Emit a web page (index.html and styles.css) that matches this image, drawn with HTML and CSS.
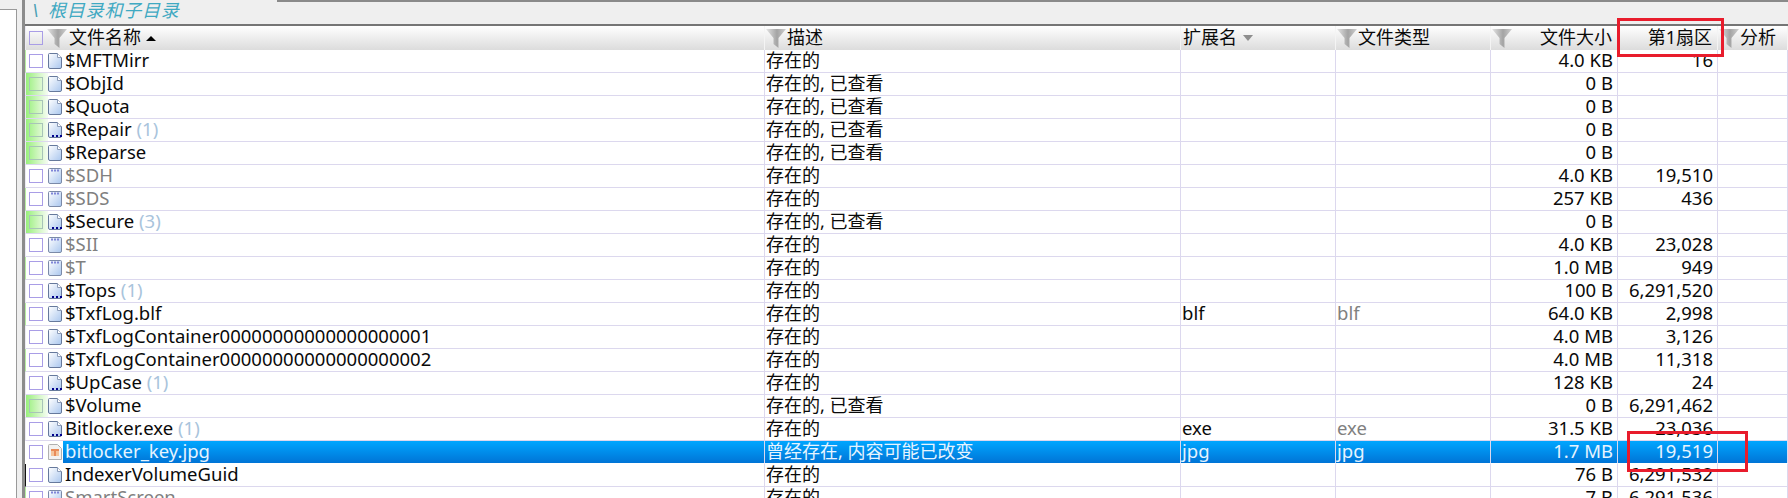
FILE: index.html
```html
<!DOCTYPE html>
<html lang="zh">
<head>
  <meta charset="UTF-8" />
  <title>根目录和子目录</title>
  <link rel="stylesheet" href="styles.css">
</head>
<body>
  <svg class="defs" aria-hidden="true">
    <defs>
      <linearGradient id="paper" x1="0" y1="0" x2="1" y2="1">
        <stop offset="0" stop-color="#ffffff" />
        <stop offset="1" stop-color="#a9c6ee" />
      </linearGradient>
      <linearGradient id="funnel" x1="0" y1="0" x2="1" y2="0">
        <stop offset="0" stop-color="#e4e4e4" />
        <stop offset=".55" stop-color="#a4a4a4" />
        <stop offset="1" stop-color="#cfcfcf" />
      </linearGradient>
      <symbol id="file" viewBox="0 0 14 16">
        <path d="M1.5.5H9.5L13.5 4.5V14a1.5 1.5 0 0 1-1.5 1.5H2A1.5 1.5 0 0 1 .5 14V1.500A1 1 0 0 1 1.500.5Z" fill="url(#paper)" stroke="#66799c" />
        <path d="M9.500.5V4.500H13.500" fill="#fff" stroke="#8c9cb8" />
      </symbol>
      <symbol id="sys" viewBox="0 0 14 16">
        <path d="M1.500.5H12.500A1 1 0 0 1 13.500 1.500V14a1.500 1.500 0 0 1-1.500 1.500H2A1.500 1.500 0 0 1 .5 14V1.500A1 1 0 0 1 1.500.5Z" fill="url(#paper)" stroke="#7b8aa8" />
        <path d="M3 2.500H11" stroke="#7f86d8" stroke-width="2" stroke-dasharray="2 1" />
      </symbol>
      <symbol id="jpg" viewBox="0 0 14 16">
        <path d="M1.500.5H9.500L13.500 4.500V15.500H.5V1.500A1 1 0 0 1 1.500.5Z" fill="#f2f2f2" stroke="#b0b0b0" />
        <rect x="3" y="5" width="8" height="7" fill="#f4c49c" />
        <path d="M3 5H11V7H3ZM6 7H8V12H6Z" fill="#e88a58" />
      </symbol>
      <symbol id="filter" viewBox="0 0 20 19">
        <path d="M0 0H20L12.500 9V19L7.500 15V9Z" fill="url(#funnel)" />
      </symbol>
    </defs>
  </svg>

  <div class="left-pane"></div>

  <main class="main-pane">
    <div class="top-edge"></div>
    <div class="crumb"><span class="crumb-root">\</span><span>根目录和子目录</span></div>

    <table class="files">
      <colgroup>
        <col class="c-name"><col class="c-desc"><col class="c-ext"><col class="c-type"><col class="c-size"><col class="c-sector"><col>
      </colgroup>
      <thead>
        <tr>
          <th><div class="head head-first"><span class="tick"></span><svg class="filter"><use href="#filter" /></svg><span class="head-name">文件名称</span><span class="sort-up"></span></div></th>
          <th><div class="head"><svg class="filter"><use href="#filter" /></svg>描述</div></th>
          <th><div class="head head-plain">扩展名<span class="sort-down"></span></div></th>
          <th><div class="head"><svg class="filter"><use href="#filter" /></svg>文件类型</div></th>
          <th><div class="head"><svg class="filter"><use href="#filter" /></svg><span class="head-right">文件大小</span></div></th>
          <th><div class="head"><span class="head-right">第1扇区</span></div></th>
          <th><div class="head"><svg class="filter"><use href="#filter" /></svg>分析</div></th>
        </tr>
      </thead>
      <tbody>
        <tr class="edge"><td><div class="name-cell"><span class="tick"></span><svg class="icon"><use href="#file" /></svg><span class="fname">$MFTMirr</span></div></td><td class="desc">存在的</td><td></td><td></td><td class="num">4.0 KB</td><td class="num">16</td><td></td></tr>
        <tr class="seen"><td><div class="name-cell"><span class="tick"></span><svg class="icon"><use href="#file" /></svg><span class="fname">$ObjId</span></div></td><td class="desc">存在的, 已查看</td><td></td><td></td><td class="num">0 B</td><td class="num"></td><td></td></tr>
        <tr class="seen"><td><div class="name-cell"><span class="tick"></span><svg class="icon"><use href="#file" /></svg><span class="fname">$Quota</span></div></td><td class="desc">存在的, 已查看</td><td></td><td></td><td class="num">0 B</td><td class="num"></td><td></td></tr>
        <tr class="seen"><td><div class="name-cell"><span class="tick"></span><span class="icon-wrap"><svg class="icon"><use href="#file" /></svg><span class="dots"></span></span><span class="fname">$Repair <span class="count">(1)</span></span></div></td><td class="desc">存在的, 已查看</td><td></td><td></td><td class="num">0 B</td><td class="num"></td><td></td></tr>
        <tr class="seen"><td><div class="name-cell"><span class="tick"></span><svg class="icon"><use href="#file" /></svg><span class="fname">$Reparse</span></div></td><td class="desc">存在的, 已查看</td><td></td><td></td><td class="num">0 B</td><td class="num"></td><td></td></tr>
        <tr><td><div class="name-cell"><span class="tick"></span><svg class="icon"><use href="#sys" /></svg><span class="fname grey">$SDH</span></div></td><td class="desc">存在的</td><td></td><td></td><td class="num">4.0 KB</td><td class="num">19,510</td><td></td></tr>
        <tr class="edge"><td><div class="name-cell"><span class="tick"></span><svg class="icon"><use href="#sys" /></svg><span class="fname grey">$SDS</span></div></td><td class="desc">存在的</td><td></td><td></td><td class="num">257 KB</td><td class="num">436</td><td></td></tr>
        <tr class="seen"><td><div class="name-cell"><span class="tick"></span><span class="icon-wrap"><svg class="icon"><use href="#file" /></svg><span class="dots"></span></span><span class="fname">$Secure <span class="count">(3)</span></span></div></td><td class="desc">存在的, 已查看</td><td></td><td></td><td class="num">0 B</td><td class="num"></td><td></td></tr>
        <tr><td><div class="name-cell"><span class="tick"></span><svg class="icon"><use href="#sys" /></svg><span class="fname grey">$SII</span></div></td><td class="desc">存在的</td><td></td><td></td><td class="num">4.0 KB</td><td class="num">23,028</td><td></td></tr>
        <tr class="edge"><td><div class="name-cell"><span class="tick"></span><svg class="icon"><use href="#sys" /></svg><span class="fname grey">$T</span></div></td><td class="desc">存在的</td><td></td><td></td><td class="num">1.0 MB</td><td class="num">949</td><td></td></tr>
        <tr><td><div class="name-cell"><span class="tick"></span><span class="icon-wrap"><svg class="icon"><use href="#file" /></svg><span class="dots"></span></span><span class="fname">$Tops <span class="count">(1)</span></span></div></td><td class="desc">存在的</td><td></td><td></td><td class="num">100 B</td><td class="num">6,291,520</td><td></td></tr>
        <tr class="edge"><td><div class="name-cell"><span class="tick"></span><svg class="icon"><use href="#file" /></svg><span class="fname">$TxfLog.blf</span></div></td><td class="desc">存在的</td><td>blf</td><td class="grey">blf</td><td class="num">64.0 KB</td><td class="num">2,998</td><td></td></tr>
        <tr><td><div class="name-cell"><span class="tick"></span><svg class="icon"><use href="#file" /></svg><span class="fname">$TxfLogContainer00000000000000000001</span></div></td><td class="desc">存在的</td><td></td><td></td><td class="num">4.0 MB</td><td class="num">3,126</td><td></td></tr>
        <tr class="edge"><td><div class="name-cell"><span class="tick"></span><svg class="icon"><use href="#file" /></svg><span class="fname">$TxfLogContainer00000000000000000002</span></div></td><td class="desc">存在的</td><td></td><td></td><td class="num">4.0 MB</td><td class="num">11,318</td><td></td></tr>
        <tr><td><div class="name-cell"><span class="tick"></span><span class="icon-wrap"><svg class="icon"><use href="#file" /></svg><span class="dots"></span></span><span class="fname">$UpCase <span class="count">(1)</span></span></div></td><td class="desc">存在的</td><td></td><td></td><td class="num">128 KB</td><td class="num">24</td><td></td></tr>
        <tr class="seen"><td><div class="name-cell"><span class="tick"></span><svg class="icon"><use href="#file" /></svg><span class="fname">$Volume</span></div></td><td class="desc">存在的, 已查看</td><td></td><td></td><td class="num">0 B</td><td class="num">6,291,462</td><td></td></tr>
        <tr><td><div class="name-cell"><span class="tick"></span><span class="icon-wrap"><svg class="icon"><use href="#file" /></svg><span class="dots"></span></span><span class="fname">Bitlocker.exe <span class="count">(1)</span></span></div></td><td class="desc">存在的</td><td>exe</td><td class="grey">exe</td><td class="num">31.5 KB</td><td class="num">23,036</td><td></td></tr>
        <tr class="selected"><td><div class="name-cell"><span class="tick"></span><svg class="icon"><use href="#jpg" /></svg><span class="fname">bitlocker_key.jpg</span></div></td><td class="desc">曾经存在, 内容可能已改变</td><td>jpg</td><td>jpg</td><td class="num">1.7 MB</td><td class="num">19,519</td><td></td></tr>
        <tr class="edge-dark"><td><div class="name-cell"><span class="tick"></span><svg class="icon"><use href="#file" /></svg><span class="fname">IndexerVolumeGuid</span></div></td><td class="desc">存在的</td><td></td><td></td><td class="num">76 B</td><td class="num">6,291,532</td><td></td></tr>
        <tr class="edge"><td><div class="name-cell"><span class="tick"></span><svg class="icon"><use href="#sys" /></svg><span class="fname grey">SmartScreen</span></div></td><td class="desc">存在的</td><td></td><td></td><td class="num">7 B</td><td class="num">6,291,536</td><td></td></tr>
      </tbody>
    </table>
  </main>

  <div class="mark mark-head"></div>
  <div class="mark mark-row"></div>
</body>
</html>
```

FILE: styles.css
```css
html, body {
  margin: 0;
  height: 498px;
  overflow: hidden;
}
body {
  display: flex;
  align-items: flex-start;
  background: #efefef;
  color: #0a0a0a;
  font-family: "Noto Sans", "Noto Sans CJK SC", sans-serif;
  font-size: 18.5px;
}
.defs {
  position: absolute;
  width: 0;
  height: 0;
}
.left-pane {
  width: 17px;
  height: 489px;
  margin-top: 9px;
  margin-right: 5px;
  background: #ffffff;
  border-top: 1px solid #9a9a9a;
  border-right: 1px solid #9a9a9a;
  box-sizing: border-box;
  flex: none;
}
.main-pane {
  flex: 1;
  min-width: 0;
  border-left: 3px solid #8c8c8c;
}
.top-edge {
  height: 2px;
  margin-left: 252px;
  border-top: 2px solid #8a8a8a;
  box-sizing: border-box;
}
.crumb {
  height: 17px;
  display: flex;
  align-items: center;
  padding: 0 0 5px 7px;
  border-bottom: 2px solid #757575;
  color: #3fa9c2;
  font-size: 18px;
  font-style: italic;
  letter-spacing: 0.8px;
  line-height: 17px;
}
.crumb-root {
  width: 16px;
  color: #4a9fb5;
}

/* file table */
.files {
  table-layout: fixed;
  width: 1763px;
  border-collapse: separate;
  border-spacing: 0;
  background: #ffffff;
}
.c-name { width: 740px; }
.c-desc { width: 416px; }
.c-ext { width: 155px; }
.c-type { width: 155px; }
.c-size { width: 127px; }
.c-sector { width: 100px; }
th {
  height: 24px;
  padding: 0;
  background: linear-gradient(to bottom, #ffffff, #dcdcdc);
  border-right: 1px solid #f4f4f4;
  font-size: 18px;
  font-weight: 400;
  text-align: left;
  vertical-align: top;
}
td {
  height: 22px;
  padding: 0 0 0 1px;
  border-right: 1px solid #dcd8ee;
  border-bottom: 1px solid #dcd8ee;
  line-height: 20px;
  white-space: nowrap;
  vertical-align: top;
}
td:first-child {
  padding: 0;
  border-left: 1px solid #eceaf4;
}
th:first-child {
  border-left: 1px solid #eceaf4;
}
.desc {
  font-size: 18px;
}
.num {
  padding-right: 4px;
  text-align: right;
}
.grey {
  color: #808080;
}
.edge td:first-child {
  border-left-color: #b6eea2;
}
.edge-dark td:first-child {
  border-left-color: #111111;
}

/* name column */
.name-cell {
  display: flex;
  align-items: center;
  height: 22px;
  padding-left: 3px;
}
.tick {
  width: 12px;
  height: 12px;
  margin-right: 5px;
  border: 1px solid #a99de6;
  flex: none;
  align-self: center;
}
.seen .tick {
  border-color: #a8c4b8;
}
.seen td:first-child .name-cell {
  background: linear-gradient(to right, #98f07c, #cff6bf 55%, #f2fcee 95%) 0 0 / 22px 100% no-repeat;
}
.icon {
  display: block;
  width: 14px;
  height: 16px;
  flex: none;
}
.icon-wrap {
  position: relative;
  width: 14px;
  height: 16px;
  flex: none;
}
.dots {
  position: absolute;
  left: 4px;
  bottom: 1px;
  width: 11px;
  height: 2px;
  background: repeating-linear-gradient(to right, #00008c 0 2px, transparent 2px 4px);
}
.fname {
  flex: 1;
  align-self: flex-start;
  height: 22px;
  margin-left: 1px;
  padding-left: 2px;
  line-height: 20px;
}
.count {
  color: #a9c4dc;
}
.selected td {
  background: linear-gradient(to bottom, #00a6ff, #0074d6);
  color: #e6f4ff;
  border-bottom-color: #ffffff;
}
.selected td:first-child {
  background: #ffffff;
  border-left-color: #ffffff;
}
.selected .fname {
  background: linear-gradient(to bottom, #00a6ff, #0074d6);
  color: #e6f4ff;
}

/* header bits */
.head {
  display: flex;
  align-items: flex-start;
  height: 24px;
  padding-left: 1px;
  padding-right: 5px;
  line-height: 22px;
}
.head-first {
  padding-left: 3px;
}
.head-plain {
  padding-left: 2px;
}
.head-right {
  margin-left: auto;
}
.head-name {
  margin-left: 1px;
}
.filter {
  width: 20px;
  height: 19px;
  margin-top: 3px;
  margin-right: 1px;
  flex: none;
}
.head-first .filter {
  margin-left: -1px;
}
.sort-up {
  width: 0;
  height: 0;
  margin-left: 5px;
  border: 5.5px solid transparent;
  border-top: 0;
  border-bottom: 5.5px solid #000000;
  align-self: center;
}
.sort-down {
  width: 0;
  height: 0;
  margin-left: 6px;
  border: 5.5px solid transparent;
  border-bottom: 0;
  border-top: 6px solid #8e8e8e;
  align-self: center;
}

/* red annotation boxes */
.mark {
  position: absolute;
  border: 3px solid #e81c2c;
  box-sizing: border-box;
}
.mark-head {
  left: 1617px;
  top: 18px;
  width: 107px;
  height: 39px;
}
.mark-row {
  left: 1627px;
  top: 431px;
  width: 121px;
  height: 41px;
}
```
